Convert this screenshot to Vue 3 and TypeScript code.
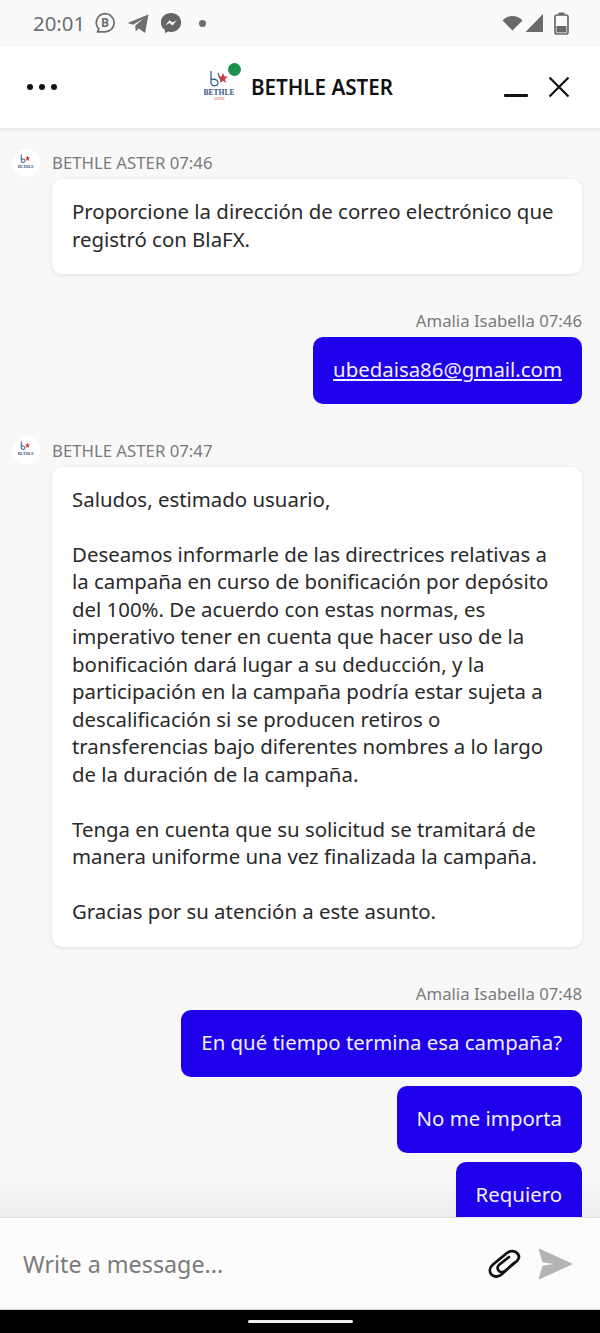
<template>
  <div class="screen">
    <div class="status-bar">
      <span class="clock">20:01</span>
      <svg class="st-icon" width="22" height="22" viewBox="1 1 20 20">
        <path d="M11 2.500a8.300 8.300 0 0 1 0 16.600H4.200l1.200-2.600A8.300 8.300 0 0 1 11 2.500z" fill="none" stroke="#6e6e6e" stroke-width="1.600" stroke-linejoin="round" />
        <text x="11" y="15" text-anchor="middle" class="b-letter">B</text>
      </svg>
      <svg class="st-icon" width="22" height="22" viewBox="1 1 20 20">
        <path d="M1.500 11 20.500 3.200 17.500 20 11.600 16 9 18.800 8.400 13.600 16 7 6.600 12.600z" fill="#6e6e6e" />
      </svg>
      <svg class="st-icon" width="22" height="22" viewBox="1 1 20 20">
        <path d="M11 2c5.200 0 9.200 3.700 9.200 8.600s-4 8.600-9.200 8.600c-.9 0-1.800-.1-2.600-.4L5.500 20.300v-3C3.300 15.700 1.800 13.400 1.800 10.600 1.800 5.700 5.800 2 11 2z" fill="#666" />
        <path d="M5.800 13.300 9.600 8.400l2.800 2.200 3.800-2.200-3.800 4.900-2.800-2.200z" fill="#fafafc" />
      </svg>
      <span class="st-dot"></span>
      <span class="st-spacer"></span>
      <svg width="21" height="16" viewBox="0 0 21 16" class="wifi">
        <path d="M0.500 5.500C3 2.500 6.500 1 10.500 1s7.500 1.500 10 4.500L10.500 15.500z" fill="#6a6a6a" />
      </svg>
      <svg width="18" height="18" viewBox="0 0 18 18" class="signal">
        <path d="M0.500 18 18 0v18z" fill="#6a6a6a" />
      </svg>
      <svg width="15" height="23" viewBox="0 0 15 23" class="battery">
        <rect x="1" y="3" width="13" height="19" rx="2" fill="none" stroke="#6a6a6a" stroke-width="1.700" />
        <rect x="4.500" y="0.500" width="6" height="2.500" fill="#6a6a6a" />
        <rect x="2.500" y="14" width="10" height="6.500" fill="#6a6a6a" />
      </svg>
    </div>

    <header class="top-bar">
      <div class="dots"><i></i><i></i><i></i></div>
      <div class="agent">
        <div class="logo-wrap">
          <svg width="32" height="38" viewBox="0 0 32 38">
            <path d="M7 3v12.500a3.800 3.800 0 0 0 7 0c.5-2.500-1.500-5-6.500-4" fill="none" stroke="#35608f" stroke-width="1.300" />
            <path d="M14 5l3.500 9" stroke="#35608f" stroke-width="1.200" />
            <path d="M19 5l1.500 3.500h3.500L21 11l1 4-3-2.200-3 2.200 1-4-3-2.500h3.500z" fill="#cf3b3b" />
            <text x="15" y="26.500" text-anchor="middle" class="logo-name">BETHLE</text>
            <text x="15" y="32" text-anchor="middle" class="logo-sub">ASTER</text>
          </svg>
          <span class="online"></span>
        </div>
        <span class="agent-name">BETHLE ASTER</span>
      </div>
      <div class="window-btns">
        <span class="minimize"></span>
        <svg width="22" height="22" viewBox="0 0 22 22">
          <path d="M1.500 1.500l19 19M20.500 1.500l-19 19" stroke="#111" stroke-width="2.200" fill="none" />
        </svg>
      </div>
    </header>

    <main class="chat">
      <div class="fade"></div>
      <section v-for="(group, i) in groups" :key="i" class="group" :class="group.mine ? 'mine' : 'theirs'">
        <div class="meta">
          <span v-if="!group.mine" class="avatar">
            <svg width="20" height="20" viewBox="0 0 32 38">
              <path d="M7 3v12.500a3.800 3.800 0 0 0 7 0c.5-2.500-1.500-5-6.500-4" fill="none" stroke="#35608f" stroke-width="2" />
              <path d="M19 5l1.500 3.500h3.500L21 11l1 4-3-2.200-3 2.200 1-4-3-2.500h3.500z" fill="#cf3b3b" />
              <text x="15.500" y="28" text-anchor="middle" class="logo-name">BETHLE</text>
            </svg>
          </span>
          <span>{{ group.name }} {{ group.time }}</span>
        </div>
        <div v-for="(msg, j) in group.messages" :key="j" class="bubble">
          <a v-if="msg.link" class="mail">{{ msg.text }}</a>
          <template v-else>{{ msg.text }}</template>
        </div>
      </section>
    </main>

    <footer class="composer">
      <span class="placeholder">Write a message...</span>
      <svg class="clip" width="34" height="30" viewBox="0 0 34 30">
        <path d="M26 14 13.500 25.500C10 28.500 5 28 3 25 1 22 2 18 5 15.500L19 4c3-2.500 8-2.500 10.500.5 2 2.500 1.500 5.500-.5 7.500L17 22c-2 1.500-5 1.500-6.500-.5-1.500-2-1-4.500 1-6L21 8" fill="none" stroke="#111" stroke-width="2.800" stroke-linecap="round" />
      </svg>
      <svg class="send" width="36" height="32" viewBox="0 0 36 32">
        <path d="M2 1 35 16 2 31 6 18 22 16 6 14z" fill="#b4b4b4" stroke="#b4b4b4" stroke-width="1" stroke-linejoin="round" />
      </svg>
    </footer>
    <div class="nav-bar"><span class="home-pill"></span></div>
  </div>
</template>

<script setup lang="ts">
interface Message {
  text: string
  link?: boolean
}

interface Group {
  name: string
  time: string
  mine: boolean
  messages: Message[]
}

const longMessage = `Saludos, estimado usuario,

Deseamos informarle de las directrices relativas a la campaña en curso de bonificación por depósito del 100%. De acuerdo con estas normas, es imperativo tener en cuenta que hacer uso de la bonificación dará lugar a su deducción, y la participación en la campaña podría estar sujeta a descalificación si se producen retiros o transferencias bajo diferentes nombres a lo largo de la duración de la campaña.

Tenga en cuenta que su solicitud se tramitará de manera uniforme una vez finalizada la campaña.

Gracias por su atención a este asunto.`

const groups: Group[] = [
  {
    name: 'BETHLE ASTER',
    time: '07:46',
    mine: false,
    messages: [{ text: 'Proporcione la dirección de correo electrónico que registró con BlaFX.' }]
  },
  {
    name: 'Amalia Isabella',
    time: '07:46',
    mine: true,
    messages: [{ text: 'ubedaisa86@gmail.com', link: true }]
  },
  {
    name: 'BETHLE ASTER',
    time: '07:47',
    mine: false,
    messages: [{ text: longMessage }]
  },
  {
    name: 'Amalia Isabella',
    time: '07:48',
    mine: true,
    messages: [
      { text: 'En qué tiempo termina esa campaña?' },
      { text: 'No me importa' },
      { text: 'Requiero' }
    ]
  }
]
</script>

<style scoped>
.screen {
  width: 600px;
  height: 1333px;
  display: flex;
  flex-direction: column;
  overflow: hidden;
  font-family: "Noto Sans", "Open Sans", sans-serif;
  background: #f8f8f8;
}

.status-bar {
  height: 46px;
  flex: none;
  display: flex;
  align-items: center;
  padding: 0 31px 0 33px;
  background: #fafafc;
  color: #6e6e6e;
}

.clock {
  font-size: 20.400px;
  width: 61px;
}

.b-letter {
  font-size: 11px;
  font-weight: 700;
  fill: #6e6e6e;
}

.st-icon {
  margin-right: 11px;
  flex: none;
}

.st-dot {
  width: 7px;
  height: 7px;
  margin-left: 6px;
  border-radius: 50%;
  background: #6e6e6e;
}

.st-spacer {
  flex: 1;
}

.wifi {
  margin-right: 2px;
}

.signal {
  margin-right: 11px;
}

.top-bar {
  height: 82px;
  flex: none;
  display: flex;
  align-items: center;
  position: relative;
  z-index: 2;
  padding: 0 30px 0 27px;
  background: #fff;
  box-shadow: 0 1px 4px rgba(0, 0, 0, 0.12);
}

.dots {
  display: flex;
  gap: 6px;
}

.dots i {
  width: 6px;
  height: 6px;
  border-radius: 50%;
  background: #111;
}

.agent {
  display: flex;
  align-items: center;
  margin-left: 147px;
  flex: 1;
}

.logo-wrap {
  position: relative;
  width: 32px;
  height: 38px;
  margin-right: 15px;
}

.logo-name {
  font-family: "Liberation Serif", serif;
  font-size: 7.500px;
  font-weight: 700;
  fill: #35507f;
}

.logo-sub {
  font-family: "Liberation Serif", serif;
  font-size: 3.500px;
  fill: #cf3b3b;
}

.online {
  position: absolute;
  top: -5px;
  right: -5px;
  width: 13px;
  height: 13px;
  border-radius: 50%;
  background: #1e8e50;
}

.agent-name {
  font-size: 20.600px;
  font-weight: 600;
  color: #111;
}

.window-btns {
  display: flex;
  align-items: center;
  gap: 20px;
}

.minimize {
  width: 24px;
  height: 3px;
  margin-top: 16px;
  background: #111;
  border-radius: 1px;
}

.chat {
  flex: 1;
  min-height: 0;
  position: relative;
  overflow: hidden;
  padding: 23.500px 18px 0 12px;
  background: #f8f8f8;
}

.group {
  position: relative;
  display: flex;
  flex-direction: column;
  margin-bottom: 26.600px;
}

.mine {
  align-items: flex-end;
}

.meta {
  display: flex;
  align-items: center;
  height: 22px;
  margin-bottom: 5.500px;
  font-size: 16.750px;
  color: #7b7b7b;
}

.avatar {
  width: 28px;
  height: 28px;
  margin-right: 12px;
  display: flex;
  align-items: center;
  justify-content: center;
  border-radius: 50%;
  background: #fff;
}

.bubble {
  padding: 19px 20px 21px;
  margin-bottom: 8.600px;
  font-size: 20.400px;
  line-height: 27.500px;
  border-radius: 10px;
  white-space: pre-line;
}

.theirs .bubble {
  margin-left: 40px;
  background: #fff;
  color: #2a2a2a;
  box-shadow: 0 1px 4px rgba(0, 0, 0, 0.1);
}

.mine .bubble {
  background: #1f00ea;
  color: #f2f0ff;
}

.mail {
  text-decoration: underline;
}

.fade {
  position: absolute;
  left: 0;
  right: 0;
  bottom: 0;
  height: 40px;
  background: linear-gradient(rgba(236, 236, 236, 0), rgba(236, 236, 236, 0.85));
}

.composer {
  height: 93px;
  flex: none;
  display: flex;
  align-items: center;
  position: relative;
  z-index: 2;
  padding: 0 27px 0 23px;
  background: #fcfcfc;
  border-top: 1px solid #e2e2e2;
  border-bottom: 1px solid #cfcfcf;
  box-sizing: border-box;
}

.placeholder {
  flex: 1;
  font-size: 23.300px;
  color: #7b7b7b;
}

.clip {
  margin-right: 15px;
}

.nav-bar {
  height: 23px;
  flex: none;
  display: flex;
  justify-content: center;
  padding-top: 10px;
  box-sizing: border-box;
  background: #000;
}

.home-pill {
  width: 105px;
  height: 3px;
  border-radius: 2px;
  background: #eee;
}
</style>
